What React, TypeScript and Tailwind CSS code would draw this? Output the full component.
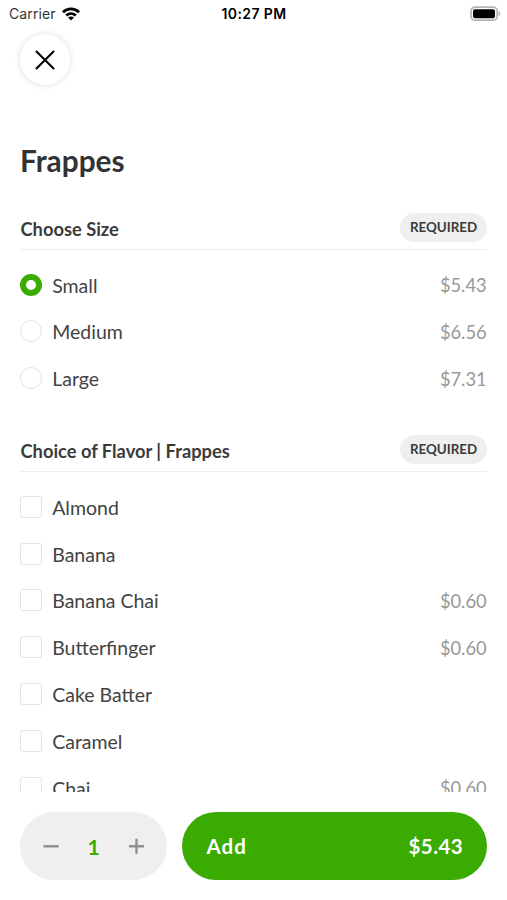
import React, { useState } from 'react';

interface Option {
  name: string;
  price?: string;
}

const sizes: Option[] = [
  { name: 'Small', price: '$5.43' },
  { name: 'Medium', price: '$6.56' },
  { name: 'Large', price: '$7.31' },
];

const flavors: Option[] = [
  { name: 'Almond' },
  { name: 'Banana' },
  { name: 'Banana Chai', price: '$0.60' },
  { name: 'Butterfinger', price: '$0.60' },
  { name: 'Cake Batter' },
  { name: 'Caramel' },
  { name: 'Chai', price: '$0.60' },
];

const StatusBar: React.FC = () => (
  <div className="grid h-7 shrink-0 grid-cols-3 items-center pl-[9px] pr-[6px] font-[Inter,sans-serif] text-black">
    <div className="flex items-center gap-[6px]">
      <span className="text-[14px] leading-7 tracking-[0.1px] text-[#333]">Carrier</span>
      <svg width="18" height="14" viewBox="0 0 18 14" fill="none" stroke="#000" strokeWidth="2.7">
        <path d="M1 5.2C5.5 0.7 12.5 0.7 17 5.2" />
        <path d="M4.2 8.5C7 5.9 11 5.9 13.8 8.5" />
        <path d="M9 13.4L6.1 10.6C7.7 9.1 10.3 9.1 11.9 10.6Z" fill="#000" stroke="none" />
      </svg>
    </div>
    <span className="-ml-[2px] whitespace-nowrap text-center text-[14px] font-semibold leading-7 tracking-[0.4px]">
      10:27 PM
    </span>
    <svg className="justify-self-end" width="32" height="16" viewBox="0 0 32 16">
      <rect x="2" y="1.2" width="26.2" height="13" rx="4" fill="#fff" stroke="#b5b5b5" strokeWidth="1.7" />
      <rect x="4" y="3.2" width="22" height="9" rx="2" fill="#000" />
      <path d="M29.5 5.3C31.8 6 31.8 9.4 29.5 10.1Z" fill="#b5b5b5" />
    </svg>
  </div>
);

const SectionHeader: React.FC<{ title: string }> = ({ title }) => (
  <div className="flex h-[37px] items-start justify-between border-b border-[#ededed]">
    <h2 className="pl-[0.5px] text-[18.3px] font-bold leading-[32px] text-[#3b3b3b]">{title}</h2>
    <span className="h-[29px] rounded-full bg-[#efefef] px-[9.8px] text-[13.4px] font-bold leading-[29px] text-[#3b3b3b]">
      REQUIRED
    </span>
  </div>
);

interface OptionRowProps {
  option: Option;
  type: 'radio' | 'checkbox';
  selected: boolean;
  onSelect: () => void;
}

const OptionRow: React.FC<OptionRowProps> = ({ option, type, selected, onSelect }) => {
  const shape = type === 'radio' ? 'rounded-full' : 'rounded-[3px]';
  const border = selected ? 'border-[6px] border-[#3aab00]' : 'border-[1.5px] border-[#e3e3e3]';

  return (
    <button
      role={type}
      aria-checked={selected}
      onClick={onSelect}
      className="flex h-[46.85px] w-full shrink-0 items-center text-left text-[19.5px]"
    >
      <span className={`ml-[0.4px] h-[22px] w-[22px] shrink-0 bg-white ${shape} ${border}`} />
      <span className="ml-[9.8px] flex-1 pt-[1.2px] text-[#434343]">{option.name}</span>
      <span className="pr-[0.4px] pt-[2.2px] text-[18.3px] text-[#999]">{option.price}</span>
    </button>
  );
};

const App: React.FC = () => {
  const [size, setSize] = useState('Small');
  const [picked, setPicked] = useState<string[]>([]);
  const [quantity, setQuantity] = useState(1);

  const toggleFlavor = (name: string) => {
    setPicked((prev) => (prev.includes(name) ? prev.filter((n) => n !== name) : [...prev, name]));
  };

  return (
    <div className="flex h-[900px] w-[507px] flex-col overflow-hidden bg-white font-[Lato,sans-serif]">
      <StatusBar />

      <main className="min-h-0 flex-1 overflow-hidden px-5 pt-[6px]">
        <button
          aria-label="Close"
          className="flex h-[51px] w-[50px] items-center justify-center rounded-full bg-white shadow-[0_0_6px_rgba(0,0,0,0.14)]"
        >
          <svg width="20" height="20" viewBox="0 0 20 20" stroke="#000" strokeWidth="2.1" strokeLinecap="round">
            <path d="M1.5 1.5L18.5 18.5M18.5 1.5L1.5 18.5" />
          </svg>
        </button>

        <h1 className="mt-[56px] text-[29.8px] font-bold leading-[40px] text-[#333]">Frappes</h1>

        <section className="mt-[32px]">
          <SectionHeader title="Choose Size" />
          <div className="pt-[11.2px]">
            {sizes.map((option) => (
              <OptionRow
                key={option.name}
                option={option}
                type="radio"
                selected={size === option.name}
                onSelect={() => setSize(option.name)}
              />
            ))}
          </div>
        </section>

        <section className="mt-[33.25px]">
          <SectionHeader title="Choice of Flavor | Frappes" />
          <div className="pt-[11.4px]">
            {flavors.map((option) => (
              <OptionRow
                key={option.name}
                option={option}
                type="checkbox"
                selected={picked.includes(option.name)}
                onSelect={() => toggleFlavor(option.name)}
              />
            ))}
          </div>
        </section>
      </main>

      <footer className="flex h-[108px] shrink-0 gap-[15px] bg-white px-5 pt-5">
        <div className="flex h-[68px] w-[147px] items-center justify-between rounded-full bg-[#efefef] px-[23px]">
          <button aria-label="Decrease" onClick={() => setQuantity((q) => Math.max(1, q - 1))}>
            <svg width="16" height="16" viewBox="0 0 16 16" stroke="#8f8f8f" strokeWidth="2.4">
              <path d="M0.5 8.3H15.5" />
            </svg>
          </button>
          <span className="pt-[2px] text-[21px] font-bold text-[#3aab00]">{quantity}</span>
          <button aria-label="Increase" onClick={() => setQuantity((q) => q + 1)}>
            <svg width="16" height="16" viewBox="0 0 16 16" stroke="#8f8f8f" strokeWidth="2.4">
              <path d="M1 8.3H16M8.5 0.8V15.8" />
            </svg>
          </button>
        </div>
        <button className="flex h-[68px] flex-1 items-center justify-between rounded-full bg-[#3aab00] pl-[24.5px] pr-[24px] pt-[1px] text-[20.5px] font-bold tracking-[0.4px] text-white">
          <span className="tracking-[1px]">Add</span>
          <span>$5.43</span>
        </button>
      </footer>
    </div>
  );
};

export default App;
